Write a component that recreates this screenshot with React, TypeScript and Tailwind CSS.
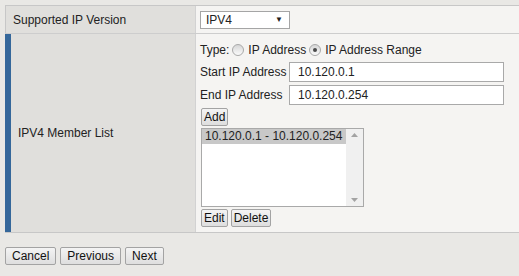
import { useState } from "react";

const btn =
  "h-[18px] border border-[#a3a3a3] rounded-[2px] bg-gradient-to-b from-[#f4f4f4] to-[#dedede] text-[12px] leading-[16px] text-[#111]";

function Radio({ checked }: { checked?: boolean }) {
  return (
    <span className="relative inline-block w-[12px] h-[12px] rounded-full border border-[#a9a9a9] bg-gradient-to-b from-[#d6d6d6] to-[#fbfbfb] ml-[3px] mr-[4px]">
      {checked && (
        <span className="absolute left-[3px] top-[3px] w-[4px] h-[4px] rounded-full bg-[#4a4a4a]" />
      )}
    </span>
  );
}

export default function App() {
  const [startIp, setStartIp] = useState("10.120.0.1");
  const [endIp, setEndIp] = useState("10.120.0.254");

  return (
    <div
      className="w-[519px] h-[276px] bg-[#e9e8e5] pt-[5px] pl-[5px] text-[12px] text-[#222] overflow-hidden"
      style={{ fontFamily: '"Liberation Sans", Arial, sans-serif' }}
    >
      <div className="border-t border-b border-[#c7c7c7]">
        {/* row 1 */}
        <div className="flex h-[28px] border-b border-[#cdcdcd]">
          <div className="w-[191px] shrink-0 bg-[#e0dfdc] border-l border-[#c7c7c7] border-r border-r-[#d2d2d2] pl-[7px] flex items-center">
            Supported IP Version
          </div>
          <div className="flex-1 bg-[#f5f4f2] pl-[4px] flex items-center">
            <div className="w-[90px] h-[18px] bg-white border border-[#a5a5a5] flex items-center justify-between pl-[5px] pr-[6px]">
              <span>IPV4</span>
              <span className="text-[8px] leading-none">▼</span>
            </div>
          </div>
        </div>

        {/* row 2 */}
        <div className="flex h-[198px]">
          <div className="w-[191px] shrink-0 bg-[#e0dfdc] border-l-[6px] border-[#35679a] border-r border-r-[#d2d2d2] pl-[7px] flex items-center">
            IPV4 Member List
          </div>
          <div className="flex-1 bg-[#f5f4f2] pl-[4px] pt-[8px]">
            <div className="h-[16px] flex items-center">
              <span>Type:</span>
              <Radio />
              <span>IP Address</span>
              <Radio checked />
              <span>IP Address Range</span>
            </div>
            <div className="grid grid-cols-[89px_215px] gap-y-[3px] items-center mt-[4px]">
              <span>Start IP Address</span>
              <input
                value={startIp}
                onChange={(e) => setStartIp(e.target.value)}
                className="h-[20px] border border-[#a9a9a9] bg-white pl-[8px] text-[12px] outline-none"
              />
              <span>End IP Address</span>
              <input
                value={endIp}
                onChange={(e) => setEndIp(e.target.value)}
                className="h-[20px] border border-[#a9a9a9] bg-white pl-[8px] text-[12px] outline-none"
              />
            </div>
            <div className="mt-[3px] pl-[1px]">
              <button className={`${btn} px-[2px]`}>Add</button>
            </div>
            <div className="mt-[2px] ml-[1px] w-[163px] h-[79px] border border-[#a9a9a9] bg-white flex">
              <div className="flex-1">
                <div className="h-[15px] bg-[#c8c8c8] pl-[3px] leading-[15px]">10.120.0.1 - 10.120.0.254</div>
              </div>
              <div className="w-[17px] bg-[#f0f0f0] flex flex-col items-center justify-between py-[4px] text-[#a3a3a3]">
                <svg width="7" height="4" viewBox="0 0 7 4">
                  <path d="M0 4 L3.5 0 L7 4 Z" fill="currentColor" />
                </svg>
                <svg width="7" height="4" viewBox="0 0 7 4">
                  <path d="M0 0 L7 0 L3.5 4 Z" fill="currentColor" />
                </svg>
              </div>
            </div>
            <div className="mt-[2px] pl-[1px] flex gap-[3px]">
              <button className={`${btn} px-[2px]`}>Edit</button>
              <button className={`${btn} px-[2px]`}>Delete</button>
            </div>
          </div>
        </div>
      </div>

      <div className="flex gap-[4px] mt-[14px]">
        <button className={`${btn} px-[6px]`}>Cancel</button>
        <button className={`${btn} px-[6px]`}>Previous</button>
        <button className={`${btn} px-[6px]`}>Next</button>
      </div>
    </div>
  );
}
